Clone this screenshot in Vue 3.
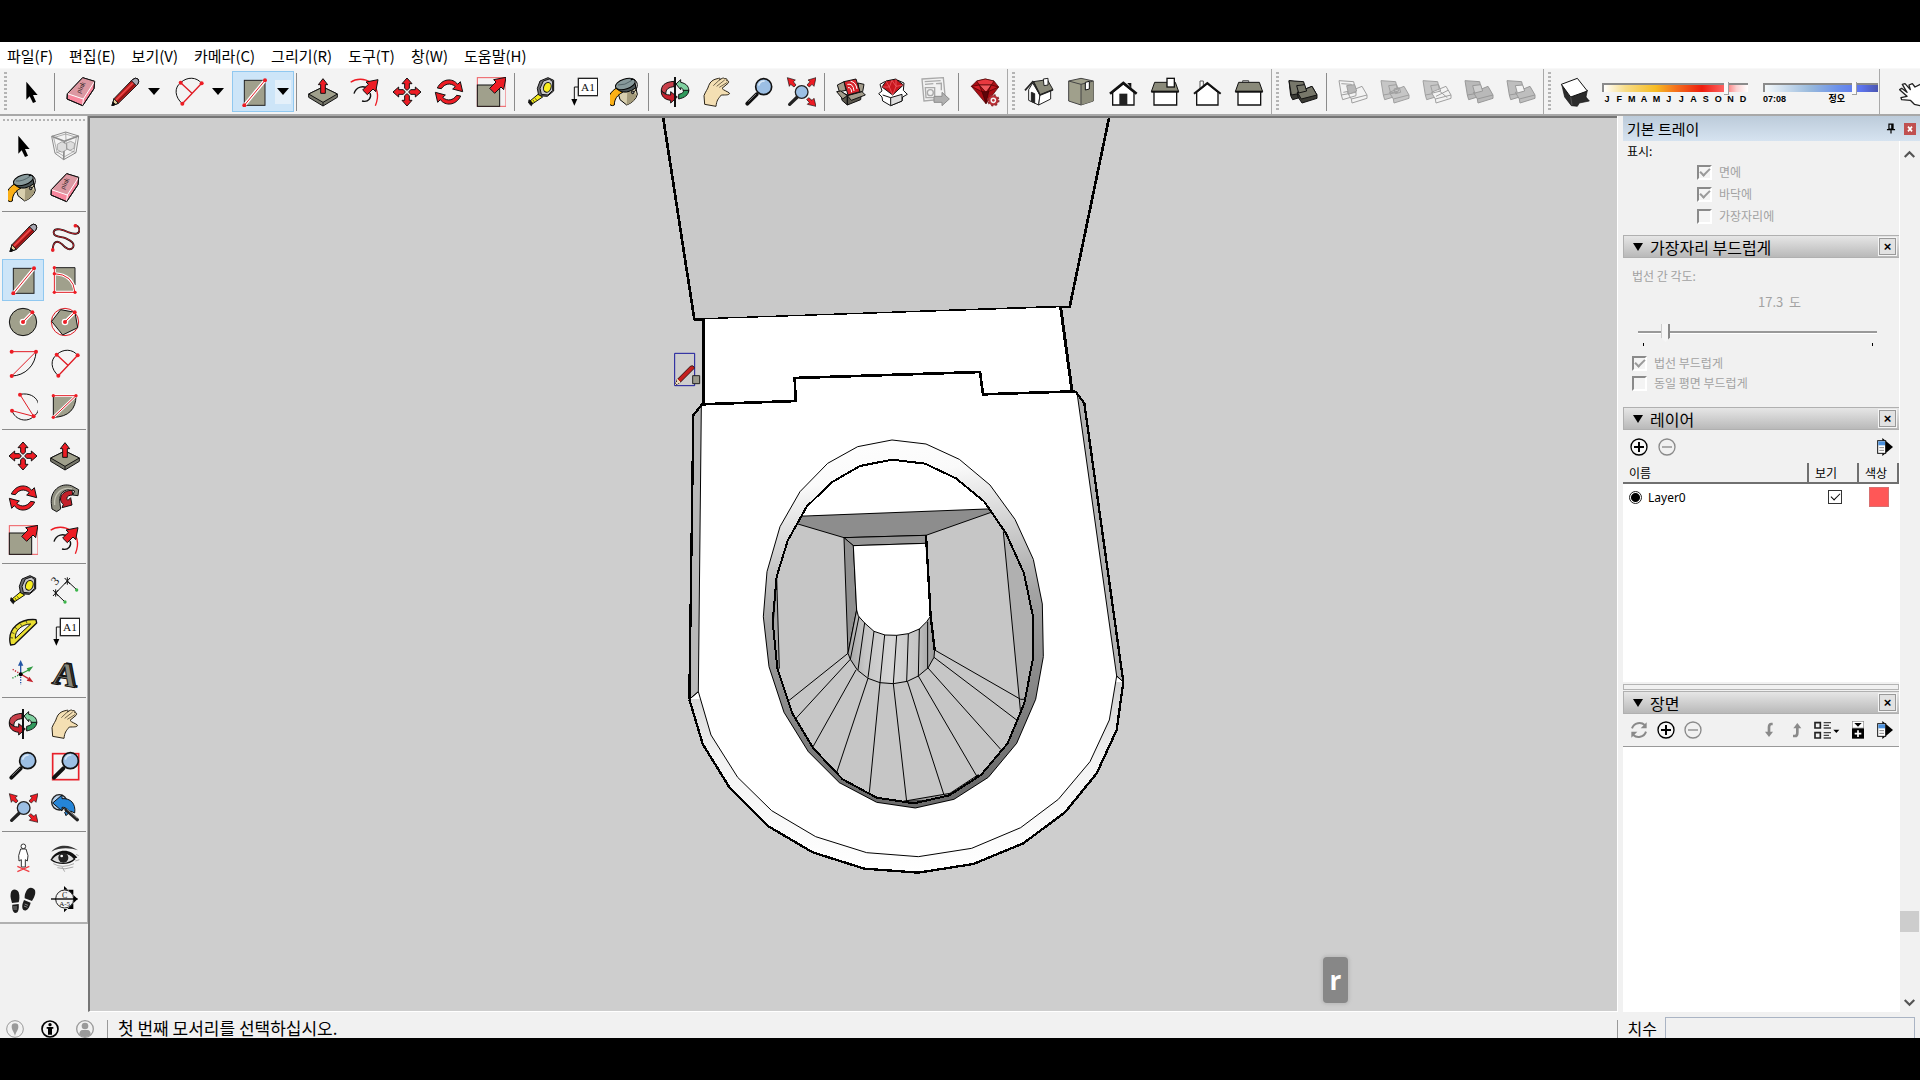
<template>
    <div class="screen">
        <svg class="sprite" aria-hidden="true">
            <defs>
                <symbol id="i-select" viewBox="0 0 90 90">
                    <path d="M31 14V68L41 58L51 78L60 74L51 54H65Z" fill="#000" />
                </symbol>
                <symbol id="i-component" viewBox="0 0 90 90">
                    <g fill="none" stroke="#8c8c8c" stroke-width="3" stroke-linejoin="round">
                        <path d="M5 16L47 3L86 15L78 65L41 86L15 67Z" />
                        <path d="M11 20L47 9L79 19L72 61L44 77L21 63Z" stroke-width="2" />
                        <path d="M5 16L43 31L86 15M43 31L41 86" stroke-width="5" />
                        <path d="M15 67L49 54L78 65M49 54L47 3" stroke-width="2" />
                        <path d="M22 40l14-8 14 8v16l-14 8-14-8zM50 36l12-5 12 6-2 15-12 6-10-6z" fill="#ddd" stroke-width="2" />
                    </g>
                </symbol>
                <symbol id="i-paint" viewBox="0 0 90 90">
                    <g stroke="#000" stroke-width="3" stroke-linejoin="round">
                        <path d="M18 26L74 18L82 52Q76 74 50 84L30 68Z" fill="#d8cfae" />
                        <path d="M52 42L80 52Q76 74 50 84Z" fill="#a49b7b" stroke="none" />
                        <path d="M22 40Q50 54 78 32L74 16Q48 34 20 32Z" fill="#4b5557" />
                        <ellipse cx="46" cy="21" rx="31" ry="15" transform="rotate(-18 46 21)" fill="#87999b" />
                        <path d="M24 24Q44 26 66 10" fill="none" stroke="#55666a" />
                        <path d="M62 8C84 2 90 34 68 48" fill="none" />
                        <circle cx="68" cy="46" r="4" fill="#888" />
                        <path d="M18 34C2 44 -7 60 -5 76Q2 90 13 84C13 66 22 54 38 46Q28 42 18 34Z" fill="#fbb016" />
                    </g>
                </symbol>
                <symbol id="i-eraser" viewBox="0 0 90 90">
                    <g stroke="#111" stroke-width="3" stroke-linejoin="round">
                        <path d="M50 2L86 13L84 35L50 86L3 66L4 50Z" fill="#f7879d" />
                        <path d="M50 2L86 13L52 66L4 50Z" fill="#dc98a2" stroke="none" />
                        <path d="M4 50L52 66L86 13M52 66L50 86" fill="none" stroke="#fff" stroke-width="3" />
                        <path d="M50 2L86 13L84 35L50 86L3 66L4 50Z" fill="none" />
                    </g>
                    <text x="0" y="0" transform="translate(42 50) rotate(-62)" class="tiny-serif" font-size="20">pink</text>
                </symbol>
                <symbol id="i-pencil" viewBox="0 0 90 90">
                    <g stroke="#111" stroke-width="3" stroke-linejoin="round">
                        <path d="M6 86L12 65L67 8Q76 0 84 6Q89 14 82 23L25 79Z" fill="#bb1d1d" />
                        <path d="M6 86L12 65L25 79Z" fill="#e6cf9c" />
                        <path d="M6 86L9 76L16 82Z" fill="#000" />
                        <path d="M18 69L72 15" stroke="#ef4b4b" stroke-width="4" />
                        <path d="M22 75L77 20" stroke="#6d0c0c" stroke-width="3" />
                        <path d="M64 11L79 26L83 22Q89 14 84 6Q76 0 68 8Z" fill="#a9a9b4" />
                    </g>
                </symbol>
                <symbol id="i-freehand" viewBox="-4 0 98 90">
                    <g fill="none" stroke-linecap="round">
                        <path d="M5 86C5 54 20 52 35 65C48 80 62 88 71 76C78 64 66 54 48 46C30 40 6 42 8 25C12 8 42 20 58 27C78 34 92 32 92 19C92 8 86 5 79 3" stroke="#111" stroke-width="6" />
                        <path d="M5 86C5 54 20 52 35 65C48 80 62 88 71 76C78 64 66 54 48 46C30 40 6 42 8 25C12 8 42 20 58 27C78 34 92 32 92 19C92 8 86 5 79 3" stroke="#d2252f" stroke-width="3" />
                    </g>
                    <circle cx="5" cy="84" r="6" fill="#ed1c24" /><circle cx="79" cy="5" r="6" fill="#ed1c24" />
                </symbol>
                <symbol id="i-rect" viewBox="0 0 90 90">
                    <rect x="16" y="10" width="62" height="75" fill="#a0a08c" stroke="#222" stroke-width="3" />
                    <path d="M16 85L78 10" stroke="#fff" stroke-width="10" />
                    <path d="M16 85L78 10" stroke="#e01b24" stroke-width="3" />
                    <circle cx="16" cy="85" r="6" fill="#ed1c24" /><circle cx="78" cy="10" r="6" fill="#ed1c24" />
                </symbol>
                <symbol id="i-rotrect" viewBox="0 0 90 90">
                    <path d="M13 8H75V82H13Z" fill="#a0a08c" />
                    <path d="M13 8H75V60" fill="none" stroke="#222" stroke-width="3" />
                    <path d="M13 26Q70 28 75 82H13V8" fill="none" stroke="#fff" stroke-width="9" />
                    <path d="M13 26Q70 28 75 82H13V8" fill="none" stroke="#e01b24" stroke-width="3" />
                    <g fill="#ed1c24"><circle cx="13" cy="8" r="5" /><circle cx="13" cy="26" r="5" /><circle cx="13" cy="82" r="5" /><circle cx="75" cy="82" r="5" /></g>
                </symbol>
                <symbol id="i-circle" viewBox="0 0 90 90">
                    <circle cx="45" cy="45" r="41" fill="#a0a08c" stroke="#111" stroke-width="3" />
                    <path d="M45 45L73 16" stroke="#fff" stroke-width="10" /><circle cx="45" cy="45" r="10" fill="#fff" />
                    <path d="M45 45L73 16" stroke="#e01b24" stroke-width="3" />
                    <circle cx="45" cy="45" r="6" fill="#ed1c24" /><circle cx="73" cy="16" r="6" fill="#ed1c24" />
                </symbol>
                <symbol id="i-polygon" viewBox="0 0 90 90">
                    <circle cx="45" cy="45" r="41" fill="none" stroke="#e01b24" stroke-width="3" />
                    <path d="M32 8L75 16L83 62L38 84L5 43Z" fill="#a0a08c" stroke="#111" stroke-width="3" />
                    <path d="M45 45L74 16" stroke="#fff" stroke-width="10" /><circle cx="45" cy="45" r="10" fill="#fff" />
                    <path d="M45 45L74 16" stroke="#e01b24" stroke-width="3" />
                    <circle cx="45" cy="45" r="6" fill="#ed1c24" /><circle cx="74" cy="16" r="6" fill="#ed1c24" />
                </symbol>
                <symbol id="i-arc" viewBox="0 0 90 90">
                    <path d="M84 8A74 74 0 0 1 11 81" fill="none" stroke="#111" stroke-width="3" />
                    <path d="M11 8H84L11 81" fill="none" stroke="#e01b24" stroke-width="3" />
                    <g fill="#ed1c24"><circle cx="11" cy="8" r="6" /><circle cx="84" cy="8" r="6" /><circle cx="11" cy="81" r="6" /></g>
                </symbol>
                <symbol id="i-arc2" viewBox="0 0 90 90">
                    <path d="M25 80C2 60 0 32 20 17C40 -2 68 0 83 19" fill="none" stroke="#111" stroke-width="3" />
                    <path d="M25 80L83 19M20 17L54 49" fill="none" stroke="#e01b24" stroke-width="4" />
                    <g fill="#ed1c24"><circle cx="20" cy="17" r="6" /><circle cx="83" cy="19" r="6" /><circle cx="25" cy="80" r="6" /></g>
                </symbol>
                <symbol id="i-arc3" viewBox="0 0 90 90">
                    <path d="M36 10C92 0 108 56 77 76C58 96 22 88 12 59" fill="none" stroke="#111" stroke-width="3" />
                    <path d="M36 11L77 76L12 59" fill="none" stroke="#e01b24" stroke-width="3" />
                    <g fill="#ed1c24"><circle cx="36" cy="11" r="6" /><circle cx="77" cy="76" r="6" /><circle cx="12" cy="59" r="6" /></g>
                </symbol>
                <symbol id="i-pie" viewBox="0 0 90 90">
                    <path d="M10 14H78C78 54 56 78 10 79Z" fill="#a0a08c" />
                    <path d="M78 14C78 54 56 78 10 79V14" fill="none" stroke="#111" stroke-width="3" />
                    <path d="M10 14H78L10 79" fill="none" stroke="#fff" stroke-width="8" />
                    <path d="M10 14H78L10 79" fill="none" stroke="#e01b24" stroke-width="3" />
                    <g fill="#ed1c24"><circle cx="10" cy="14" r="5" /><circle cx="78" cy="14" r="5" /><circle cx="10" cy="79" r="5" /></g>
                </symbol>
                <symbol id="i-move" viewBox="0 0 90 90">
                    <g fill="#ed1c24" stroke="#111" stroke-width="3" stroke-linejoin="round">
                        <path id="mv" d="M45 3L60 20H52V34L45 40L38 34V20H30Z" />
                        <use href="#mv" transform="rotate(90 45 45)" /><use href="#mv" transform="rotate(180 45 45)" /><use href="#mv" transform="rotate(270 45 45)" />
                    </g>
                </symbol>
                <symbol id="i-pushpull" viewBox="0 0 90 90">
                    <g stroke="#111" stroke-width="3" stroke-linejoin="round">
                        <path d="M2 51L45 30L88 51V61L45 87L2 61Z" fill="#77776a" />
                        <path d="M2 51L45 30L88 51L45 76Z" fill="#a0a08c" />
                        <path d="M45 76V87" />
                        <path d="M45 5L59 23H52V49H38V23H31Z" fill="#ed1c24" />
                    </g>
                </symbol>
                <symbol id="i-rotate" viewBox="0 0 90 90">
                    <g fill="#ed1c24" stroke="#111" stroke-width="3" stroke-linejoin="round">
                        <path id="ro" d="M10 33C24 4 56 2 71 22L79 14L86 44L56 36L64 29C50 16 32 20 22 35Z" />
                        <use href="#ro" transform="rotate(180 45 45)" />
                    </g>
                </symbol>
                <symbol id="i-follow" viewBox="0 0 90 90">
                    <g stroke="#111" stroke-width="3" stroke-linejoin="round">
                        <path d="M4 62C0 24 30 -2 64 8L86 20L84 38L68 36L74 24C44 12 24 32 30 62L32 78L20 86L6 78Z" fill="#8e8e80" />
                        <path d="M14 66C10 34 34 10 66 18" fill="none" stroke="#c3c3b4" stroke-width="4" />
                        <path d="M66 22C34 22 22 50 40 64L36 74L66 66L62 44L54 52C46 46 52 36 68 36Z" fill="#c3202a" />
                    </g>
                </symbol>
                <symbol id="i-scale" viewBox="0 0 90 90">
                    <rect x="4" y="2" width="86" height="86" fill="none" stroke="#ef5b60" stroke-width="3" />
                    <rect x="4" y="24" width="67" height="64" fill="#a0a08c" stroke="#111" stroke-width="3" />
                    <path d="M90 1L83 38L75 30L56 49L41 34L60 15L53 8Z" fill="#ed1c24" stroke="#111" stroke-width="3" />
                </symbol>
                <symbol id="i-offset" viewBox="0 0 90 90">
                    <path d="M2 16C36 -10 104 20 76 86" fill="none" stroke="#ed1c24" stroke-width="4" />
                    <path d="M12 50C18 28 42 24 54 36M36 72C56 78 66 60 60 48" fill="none" stroke="#111" stroke-width="4" />
                    <path d="M84 8L77 44L69 36L52 53L38 39L55 22L48 15Z" fill="#ed1c24" stroke="#111" stroke-width="3" />
                </symbol>
                <symbol id="i-tape" viewBox="0 0 90 90">
                    <g stroke="#111" stroke-width="3" stroke-linejoin="round">
                        <path d="M42 12L66 2L83 10V42L64 58L38 56L34 34Z" fill="#6d6d70" />
                        <path d="M52 12L70 6L80 14V40L66 54L46 52L42 34Z" fill="#c7c7c9" />
                        <ellipse cx="64" cy="31" rx="11" ry="15" fill="#f8ee20" transform="rotate(20 64 31)" />
                        <path d="M36 52L50 60L20 80L12 72Z" fill="#f6ee1c" />
                        <path d="M9 68L20 78L16 86L8 78Z" fill="#111" />
                        <path d="M28 64L32 70M21 69L25 75" stroke-width="2" />
                    </g>
                </symbol>
                <symbol id="i-dimension" viewBox="0 0 90 90">
                    <path d="M52 18L17 54M52 18L80 44M17 54L44 80" stroke="#111" stroke-width="3" />
                    <path d="M44 9L60 27M60 9L44 27M52 7V29M9 45L25 63M25 45L9 63M17 43V65" stroke="#111" stroke-width="3" />
                    <circle cx="80" cy="45" r="5" fill="#3bb54a" /><circle cx="45" cy="81" r="5" fill="#3bb54a" />
                    <text transform="translate(18 32) rotate(-48)" class="tiny-serif" font-size="36">3</text>
                </symbol>
                <symbol id="i-protractor" viewBox="0 0 90 90">
                    <path d="M6 76C0 34 36 4 84 8L86 18L20 82L8 84Z" fill="#eadf32" stroke="#111" stroke-width="4" stroke-linejoin="round" />
                    <path d="M22 64C20 38 44 22 68 21Z" fill="#f3f3f3" stroke="#111" stroke-width="3" />
                    <path d="M7 62l8 1M11 46l8 4M21 31l7 6M36 19l5 7M54 11l3 8" stroke="#111" stroke-width="2" />
                </symbol>
                <symbol id="i-text" viewBox="0 0 90 90">
                    <path d="M31 30H19V70" fill="none" stroke="#111" stroke-width="3" />
                    <path d="M10 66H28L19 86Z" fill="#000" />
                    <rect x="31" y="4" width="58" height="52" fill="#fff" stroke="#222" stroke-width="4" />
                    <text x="60" y="41" text-anchor="middle" class="tiny-serif" font-size="34">A1</text>
                </symbol>
                <symbol id="i-axes" viewBox="0 0 90 90">
                    <g fill="none" stroke-width="4">
                        <path d="M38 45V18" stroke="#2456a6" /><path d="M38 45V78" stroke="#2456a6" stroke-dasharray="4 4" />
                        <path d="M38 45L62 33" stroke="#2e9a41" /><path d="M38 45L12 58" stroke="#2e9a41" stroke-dasharray="4 4" />
                        <path d="M38 45L60 58" stroke="#c3202a" /><path d="M38 45L14 31" stroke="#c3202a" stroke-dasharray="4 4" />
                    </g>
                    <path d="M38 3L46 20H30Z" fill="#2456a6" /><path d="M76 22L63 39L56 28Z" fill="#2e9a41" /><path d="M76 70L56 65L64 53Z" fill="#c3202a" />
                    <circle cx="38" cy="46" r="6" fill="#000" />
                </symbol>
                <symbol id="i-text3d" viewBox="0 0 90 90">
                    <g class="solid-a" font-size="100" transform="rotate(10 45 45)">
                        <text x="15" y="78" fill="#3c3c34" stroke="#111" stroke-width="4">A</text>
                        <text x="9" y="80" fill="#86867a" stroke="#111" stroke-width="3">A</text>
                    </g>
                </symbol>
                <symbol id="i-orbit" viewBox="0 0 90 90">
                    <g stroke="#111" stroke-width="3" stroke-linejoin="round">
                        <path d="M42 13C14 15 2 26 5 44L18 50C16 38 26 30 42 29Z" fill="#c8404a" />
                        <path d="M48 21L62 8V16C82 20 88 32 86 44L70 42C70 36 66 33 62 32V38Z" fill="#7fd0a0" />
                        <path d="M86 40C86 54 74 62 56 66V52C66 50 72 46 70 40Z" fill="#2f9a5c" />
                        <path d="M4 38C6 50 20 54 32 54V44L52 60L32 78V70C14 68 2 58 4 38Z" fill="#c8202c" />
                    </g>
                    <path d="M45 0V90" stroke="#111" stroke-width="6" />
                </symbol>
                <symbol id="i-pan" viewBox="0 0 90 90">
                    <path d="M6 56C10 44 18 36 20 26C24 14 34 8 42 6L50 4C54 2 56 6 52 9C60 4 64 1 68 5C76 4 76 8 74 11C80 10 82 15 78 19L60 34C64 40 78 44 82 48C84 54 74 54 58 54C48 66 44 70 42 88L8 82Z" fill="#f4dfb3" stroke="#2b2418" stroke-width="3" stroke-linejoin="round" />
                    <path d="M34 26L52 9M44 28L68 9M52 31L76 16" fill="none" stroke="#2b2418" stroke-width="2" />
                </symbol>
                <symbol id="i-zoom" viewBox="0 0 90 90">
                    <path d="M10 80L38 52" stroke="#111" stroke-width="12" stroke-linecap="round" />
                    <path d="M13 74L36 51" stroke="#777" stroke-width="3" />
                    <circle cx="59" cy="29" r="24" fill="#9cbfe4" stroke="#111" stroke-width="5" />
                    <path d="M44 26C46 16 54 12 62 12" fill="none" stroke="#d7e7f6" stroke-width="5" />
                </symbol>
                <symbol id="i-zoomwin" viewBox="0 0 90 90">
                    <rect x="8" y="8" width="78" height="78" fill="none" stroke="#e8202a" stroke-width="5" />
                    <path d="M12 80L40 52" stroke="#111" stroke-width="12" stroke-linecap="round" />
                    <circle cx="61" cy="29" r="24" fill="#9cbfe4" stroke="#111" stroke-width="5" />
                    <path d="M46 26C48 16 56 12 64 12" fill="none" stroke="#d7e7f6" stroke-width="5" />
                </symbol>
                <symbol id="i-zoomext" viewBox="0 0 90 90">
                    <path d="M11 82L34 60" stroke="#222" stroke-width="10" stroke-linecap="round" />
                    <circle cx="47" cy="45" r="19" fill="#9cbfe4" stroke="#222" stroke-width="4" />
                    <g fill="#ed1c24" stroke="#111" stroke-width="2" stroke-linejoin="round">
                        <path d="M4 2L28 9L22 14L30 24L24 30L14 22L10 28Z" />
                        <path d="M90 2L84 28L78 22L70 30L63 24L72 14L66 9Z" />
                        <path d="M90 88L64 82L70 76L62 68L68 62L78 70L84 64Z" />
                    </g>
                </symbol>
                <symbol id="i-previous" viewBox="0 0 90 90">
                    <circle cx="28" cy="28" r="23" fill="#bdd3ea" stroke="#222" stroke-width="4" />
                    <path d="M8 30L36 6V17C62 15 78 32 74 60L62 54L48 68L44 58C54 50 50 42 36 43V54Z" fill="#2585d8" stroke="#111" stroke-width="3" />
                    <path d="M48 50L82 80" stroke="#222" stroke-width="10" stroke-linecap="round" />
                    <path d="M50 48L82 76" stroke="#888" stroke-width="3" />
                </symbol>
                <symbol id="i-position" viewBox="0 0 90 90">
                    <circle cx="46" cy="10" r="7" fill="#fff" stroke="#333" stroke-width="3" />
                    <path d="M38 18H54L60 38L58 54L52 50V72H40V50L33 54L32 38Z" fill="#fff" stroke="#333" stroke-width="3" />
                    <path d="M28 70L64 86M64 70L28 86" stroke="#ef4046" stroke-width="4" />
                </symbol>
                <symbol id="i-look" viewBox="0 0 90 90">
                    <path d="M4 26C24 2 60 4 84 22C62 14 30 12 4 26Z" fill="#333" />
                    <path d="M4 50C20 26 56 22 74 48C56 66 22 64 4 50Z" fill="#ddd" stroke="#111" stroke-width="4" />
                    <path d="M4 46C22 16 62 16 82 44L74 46C54 26 28 28 4 46Z" fill="#111" />
                    <circle cx="40" cy="44" r="15" fill="#222" /><circle cx="35" cy="39" r="4" fill="#fff" />
                    <path d="M10 62Q36 78 72 62M22 74Q44 82 70 72M78 34L86 38M76 54L88 50M36 72L44 86" fill="none" stroke="#aaa" stroke-width="3" />
                </symbol>
                <symbol id="i-walk" viewBox="0 0 90 90">
                    <g fill="#1c1c1c">
                        <path d="M8 26C10 10 26 10 32 22C36 34 34 46 32 52L12 54C10 44 6 36 8 26Z" /><path d="M13 59L32 57C34 74 30 84 22 84C14 82 12 72 13 59Z" />
                        <path d="M54 20C60 4 76 6 81 16C84 28 78 38 72 48L50 40C50 32 50 28 54 20Z" /><path d="M48 45L68 53C64 70 56 78 48 76C40 72 42 58 48 45Z" />
                    </g>
                    <path d="M15 66h12M16 72h11M50 57l10 4M48 63l10 4" stroke="#bbb" stroke-width="2" />
                </symbol>
                <symbol id="i-section" viewBox="0 0 90 90">
                    <path d="M42 3L83 42L42 82V72H70V14H42Z" fill="#000" />
                    <circle cx="44" cy="42" r="27" fill="#f3f3f3" stroke="#222" stroke-width="3" />
                    <path d="M3 42H83" stroke="#000" stroke-width="4" />
                    <text x="44" y="38" text-anchor="middle" class="tiny-serif" font-size="24">C</text>
                    <text x="44" y="62" text-anchor="middle" class="tiny-serif" font-size="21">A-5</text>
                </symbol>
                <symbol id="i-warehouse" viewBox="0 0 90 90">
                    <g stroke="#111" stroke-width="3" stroke-linejoin="round">
                        <path d="M4 24L24 14L30 40L10 44ZM66 18L84 22L80 44L70 46Z" fill="#a39c8b" />
                        <path d="M14 44L34 54V84L18 70ZM34 54L76 46L74 68L34 84Z" fill="#5a564c" />
                        <path d="M2 44L14 42L34 56L20 66ZM34 56L78 44L88 54L46 70Z" fill="#a39c8b" />
                        <path d="M24 14L60 6L72 44L36 54Z" fill="#d8232b" />
                    </g>
                    <path d="M34 22Q52 18 54 42M36 32Q46 30 47 46M44 13Q60 16 63 36" fill="none" stroke="#fff" stroke-width="3" />
                </symbol>
                <symbol id="i-extwarehouse" viewBox="0 0 90 90">
                    <g stroke="#111" stroke-width="3" stroke-linejoin="round">
                        <path d="M6 22L20 14L32 18L60 10L78 18L76 40L88 52L74 60L72 72L38 86L14 72L12 60L2 50L12 42Z" fill="#fff" />
                        <path d="M38 62V86L72 72V52ZM14 54L38 62" fill="#ddd" />
                        <path d="M12 30L24 12L54 6L76 24L44 54Z" fill="#c8161e" />
                        <path d="M12 30L34 30L44 54L54 28L76 24M24 12L34 30L42 10L54 28L54 6" fill="none" stroke="#f46a70" stroke-width="2" />
                    </g>
                </symbol>
                <symbol id="i-layout" viewBox="0 0 90 90">
                    <g fill="none" stroke="#a9a9a9" stroke-width="4">
                        <path d="M6 6L70 2L76 66L12 72Z" fill="#f1f1f1" /><path d="M14 14L62 11M15 22L40 20M48 20L64 19V40M16 32H44V62H18Z" />
                        <circle cx="31" cy="47" r="9" />
                    </g>
                    <path d="M42 58H66V46L88 66L66 86V76H42Z" fill="#b0b0b0" stroke="#8d8d8d" stroke-width="3" />
                </symbol>
                <symbol id="i-ruby" viewBox="0 0 90 90">
                    <g stroke="#400" stroke-width="2" stroke-linejoin="round">
                        <path d="M4 28L20 12L46 6L72 12L86 30L48 80Z" fill="#a80d14" />
                        <path d="M20 12L46 6L72 12L64 24L28 24Z" fill="#e8393f" /><path d="M4 28L28 24L36 44Z" fill="#d31f27" /><path d="M28 24H64L48 46Z" fill="#f05a5e" />
                        <path d="M86 30L64 24L54 44Z" fill="#c2151d" /><path d="M36 44L48 80L56 44Z" fill="#5e0509" />
                    </g>
                    <circle cx="70" cy="70" r="12" fill="#f3f3f3" stroke="#b93036" stroke-width="7" />
                    <circle cx="70" cy="70" r="16" fill="none" stroke="#8e2b2f" stroke-width="5" stroke-dasharray="6 6.5" />
                    <circle cx="70" cy="70" r="4" fill="#b93036" />
                </symbol>
                <symbol id="i-iso" viewBox="0 0 90 90">
                    <g stroke="#222" stroke-width="3" stroke-linejoin="round">
                        <path d="M14 38L26 18L48 54L44 84L14 70Z" fill="#fff" /><path d="M44 84L48 52L80 38V66Z" fill="#fff" />
                        <path d="M28 14L70 8L87 38L48 54Z" fill="#8a8a7a" />
                        <path d="M28 12L3 40M28 14L48 54L87 38" fill="none" stroke-width="5" />
                        <path d="M22 46L32 50V78L22 73Z" fill="#222" /><path d="M58 6L72 4V24L60 26Z" fill="#fff" />
                    </g>
                </symbol>
                <symbol id="i-top" viewBox="0 0 90 90">
                    <path d="M8 12L45 4L82 12V72L45 84L8 72Z" fill="#a0a08c" stroke="#444" stroke-width="3" />
                    <path d="M45 22V84L82 72V12Z" fill="#8f8f7d" /><path d="M8 12L45 22L82 12M45 22V84" fill="none" stroke="#444" stroke-width="3" />
                    <path d="M58 16L70 13V36L58 39Z" fill="#fff" stroke="#111" stroke-width="3" />
                </symbol>
                <symbol id="i-front" viewBox="0 0 90 90">
                    <path d="M14 46L46 20L78 46V84H14Z" fill="#fff" stroke="#111" stroke-width="4" />
                    <path d="M6 50L46 18L86 50" fill="none" stroke="#111" stroke-width="8" /><rect x="34" y="50" width="24" height="34" fill="#222" /><path d="M58 18h12v16z" fill="#111" />
                </symbol>
                <symbol id="i-right" viewBox="0 0 90 90">
                    <path d="M12 40H80V84H12Z" fill="#fff" stroke="#111" stroke-width="4" />
                    <path d="M14 16H76L86 44H4Z" fill="#8a8a7a" stroke="#111" stroke-width="3" /><path d="M4 44H86" stroke="#111" stroke-width="6" />
                    <rect x="51" y="4" width="22" height="26" fill="#fff" stroke="#111" stroke-width="4" />
                </symbol>
                <symbol id="i-back" viewBox="0 0 90 90">
                    <path d="M24 34V12H34V28" fill="#fff" stroke="#555" stroke-width="3" />
                    <path d="M14 46L46 20L78 46V84H14Z" fill="#fff" stroke="#111" stroke-width="4" /><path d="M6 50L46 18L86 50" fill="none" stroke="#111" stroke-width="6" />
                </symbol>
                <symbol id="i-left" viewBox="0 0 90 90">
                    <path d="M26 16V11H44V16" fill="#ccc" stroke="#555" stroke-width="3" />
                    <path d="M12 40H80V84H12Z" fill="#fff" stroke="#111" stroke-width="4" />
                    <path d="M14 16H76L86 44H4Z" fill="#8a8a7a" stroke="#111" stroke-width="3" /><path d="M4 44H86" stroke="#111" stroke-width="6" />
                </symbol>
                <symbol id="i-shell" viewBox="0 0 90 90">
                    <g stroke="#111" stroke-width="3" stroke-linejoin="round">
                        <path d="M3 11L47 18L54 48V56L14 68L8 56Z" fill="#3b3b35" />
                        <path d="M3 11L47 14L54 46L10 54Z" fill="#77776a" />
                        <path d="M28 46L72 28L87 54V64L42 78L30 60Z" fill="#3b3b35" />
                        <path d="M28 46L72 28L87 54L40 66Z" fill="#77776a" />
                        <path d="M26 26L50 23L56 42L32 48Z" fill="#77776a" />
                    </g>
                </symbol>
                <symbol id="i-solid1" viewBox="0 0 90 90">
                    <g stroke="#a0a0a0" stroke-width="3" stroke-linejoin="round" fill="none">
                        <path d="M3 11L47 14L54 46L10 54ZM10 54L14 68L54 56V46M28 46L72 28L87 54L40 66ZM40 66L42 78L87 64V54M10 20L40 22L46 40L16 46" />
                        <path d="M26 26L50 23L56 42L32 52Z" fill="#b8b8b8" />
                    </g>
                </symbol>
                <symbol id="i-solid2" viewBox="0 0 90 90">
                    <g stroke="#a0a0a0" stroke-width="3" stroke-linejoin="round">
                        <path d="M3 11L47 14L54 46V56L14 68L10 54Z" fill="#c6c6c6" />
                        <path d="M28 46L72 28L87 54V64L42 78L40 66Z" fill="#c6c6c6" />
                        <path d="M10 54L54 46M40 66L87 54M26 26L50 23L56 42L32 48ZM42 36L58 32L62 46L46 50Z" fill="none" />
                    </g>
                </symbol>
                <symbol id="i-solid3" viewBox="0 0 90 90">
                    <g stroke="#a0a0a0" stroke-width="3" stroke-linejoin="round">
                        <path d="M3 11L47 14L54 46V56L14 68L10 54Z" fill="#c6c6c6" />
                        <path d="M28 46L72 28L87 54V64L42 78L40 66Z" fill="#f3f3f3" />
                        <path d="M40 66L87 54M50 40L76 62M42 58L78 40M10 54L32 50M26 26L50 23L56 42L32 48Z" fill="none" />
                    </g>
                </symbol>
                <symbol id="i-solid4" viewBox="0 0 90 90">
                    <g stroke="#999" stroke-width="3" stroke-linejoin="round">
                        <path d="M3 11L47 14L54 46V56L14 68L10 54Z" fill="#b9b9b9" />
                        <path d="M28 46L72 28L87 54V64L42 78L40 66Z" fill="#b9b9b9" />
                        <path d="M10 54L34 50M40 66L87 54" fill="none" />
                        <path d="M26 26L50 23L56 42L32 48Z" fill="#cecece" />
                    </g>
                </symbol>
                <symbol id="i-solid5" viewBox="0 0 90 90">
                    <g stroke="#999" stroke-width="3" stroke-linejoin="round">
                        <path d="M3 11L47 14L54 46V56L14 68L10 54Z" fill="#bebebe" />
                        <path d="M28 46L72 28L87 54V64L42 78L40 66Z" fill="#bebebe" />
                        <path d="M10 54L34 50M40 66L87 54" fill="none" />
                        <path d="M28 26L50 24L56 42L34 48Z" fill="#f3f3f3" />
                    </g>
                </symbol>
                <symbol id="i-shadow" viewBox="0 0 90 90">
                    <path d="M5 22L14 60L34 86L52 88L58 78L88 72L78 60L82 40L30 60Z" fill="#2c2c2c" stroke="#111" stroke-width="2" />
                    <path d="M4 22L52 4L82 42L32 60Z" fill="#fff" stroke="#111" stroke-width="3" /><path d="M32 60L36 84" stroke="#666" stroke-width="2" />
                </symbol>
                <symbol id="i-grab" viewBox="0 0 90 90">
                    <path d="M90 18L66 30L58 20L48 24L52 38L36 20L28 22L42 46L26 34L20 38L42 58L24 62L26 68L52 70L64 82L90 88" fill="#fff" stroke="#222" stroke-width="4" stroke-linejoin="round" />
                </symbol>
                <symbol id="i-details" viewBox="0 0 48 54">
                    <path d="M16 0L48 27L16 54Z" fill="#000" /><rect x="2" y="8" width="24" height="38" fill="#fff" stroke="#111" stroke-width="3" />
                    <rect x="4" y="10" width="20" height="12" fill="#4a90dc" /><path d="M7 29H21M7 37H21" stroke="#888" stroke-width="3" />
                </symbol>
                <symbol id="i-add" viewBox="0 0 54 54">
                    <circle cx="27" cy="27" r="24" fill="#f7f7f7" stroke="#000" stroke-width="4" /><path d="M27 12V42M12 27H42" stroke="#000" stroke-width="6" />
                </symbol>
                <symbol id="i-remove" viewBox="0 0 54 54">
                    <circle cx="27" cy="27" r="24" fill="none" stroke="#8a8a8a" stroke-width="4" /><path d="M12 27H42" stroke="#8a8a8a" stroke-width="4" />
                </symbol>
                <symbol id="i-refresh" viewBox="0 0 54 54">
                    <path d="M6 22C12 4 34 2 44 12M48 32C42 50 20 52 10 42" fill="none" stroke="#8a8a8a" stroke-width="6" /><path d="M50 4V22H32ZM4 50V32H22Z" fill="#8a8a8a" />
                </symbol>
                <symbol id="i-down" viewBox="0 0 54 54">
                    <path d="M38 9H34Q27 9 27 19V36" fill="none" stroke="#8a8a8a" stroke-width="8" /><path d="M15 32H39L27 48Z" fill="#8a8a8a" />
                </symbol>
                <symbol id="i-up" viewBox="0 0 54 54">
                    <path d="M18 45H24Q31 45 31 35V18" fill="none" stroke="#8a8a8a" stroke-width="8" /><path d="M19 22H43L31 6Z" fill="#8a8a8a" />
                </symbol>
                <symbol id="i-list" viewBox="0 0 78 54">
                    <path d="M3 5H19V21H3ZM3 35H19V51H3Z" fill="none" stroke="#222" stroke-width="5" /><path d="M29 5H51M29 13H45M29 21H51M29 35H51M29 43H45M29 51H51" stroke="#444" stroke-width="4" /><path d="M58 26H76L67 36Z" fill="#000" />
                </symbol>
                <symbol id="i-export" viewBox="0 0 54 54">
                    <rect x="10" y="1" width="34" height="20" fill="#fff" stroke="#888" stroke-width="2" /><path d="M16 6H38L27 17Z" fill="#000" /><rect x="9" y="22" width="36" height="31" fill="#000" /><path d="M27 28V48M17 38H37" stroke="#fff" stroke-width="5" />
                </symbol>
                <symbol id="i-geo" viewBox="0 0 54 54">
                    <circle cx="27" cy="27" r="25" fill="none" stroke="#9a9a9a" stroke-width="3" /><path d="M27 48C24 34 17 30 17 20A10 10 0 0 1 37 20C37 30 30 34 27 48Z" fill="#9a9a9a" />
                </symbol>
                <symbol id="i-info" viewBox="0 0 54 54">
                    <circle cx="27" cy="27" r="24" fill="none" stroke="#000" stroke-width="5" /><circle cx="27" cy="14" r="5" /><path d="M17 21H37V26H33V44H21V26H17Z" />
                </symbol>
                <symbol id="i-user" viewBox="0 0 54 54">
                    <circle cx="27" cy="27" r="25" fill="none" stroke="#9a9a9a" stroke-width="4" /><circle cx="27" cy="18" r="10" fill="#9a9a9a" /><path d="M10 44Q10 30 20 30H34Q44 30 44 44Q27 58 10 44Z" fill="#9a9a9a" />
                </symbol>
            </defs>
        </svg>

        <nav class="menu">
            <button v-for="name in menus" :key="name" type="button">{{ name }}</button>
        </nav>

        <div class="bars">
            <div v-for="bar in toolbars" :key="bar.id" class="bar" role="toolbar">
                <span class="grip"></span>
                <template v-for="(group, g) in bar.groups" :key="g">
                    <span v-if="g" class="vsep"></span>
                    <template v-for="item in group" :key="item.icon">
                        <div v-if="item.split" class="split" :class="{ active: item.active }">
                            <button type="button" class="tool" :aria-label="item.label"><svg><use :href="'#i-' + item.icon" /></svg></button>
                            <button type="button" class="more" :aria-label="item.label + ' 메뉴'"></button>
                        </div>
                        <button v-else type="button" class="tool" :aria-label="item.label"><svg><use :href="'#i-' + item.icon" /></svg></button>
                    </template>
                </template>
                <template v-if="bar.id === 'shadow'">
                    <div class="sun month">
                        <input v-model="month" type="range" min="0" max="100" aria-label="월">
                        <div class="scale"><span v-for="(m, i) in 'JFMAMJJASOND'" :key="i">{{ m }}</span></div>
                    </div>
                    <div class="sun hour">
                        <input v-model="hour" type="range" min="0" max="100" aria-label="시간">
                        <div class="scale"><span>07:08</span><span class="noon">정오</span></div>
                    </div>
                </template>
            </div>
        </div>

        <main class="work">
            <aside class="side">
                <div class="palette" role="toolbar">
                    <span class="hgrip"></span>
                    <div v-for="(group, g) in palette" :key="g" class="cells">
                        <button v-for="item in group" :key="item.icon" type="button" class="tool" :class="{ active: item.active }" :aria-label="item.label">
                            <svg><use :href="'#i-' + item.icon" /></svg>
                        </button>
                    </div>
                </div>
            </aside>

            <section class="viewport">
                <svg viewBox="90 118 1527 893" preserveAspectRatio="xMidYMin slice" stroke-linejoin="round">
                    <defs>
                        <linearGradient id="ring" x1="0" y1="0" x2="0.1" y2="1">
                            <stop offset="0" stop-color="#fff" /><stop offset="0.14" stop-color="#fafafa" /><stop offset="0.28" stop-color="#d8d8d8" /><stop offset="0.5" stop-color="#a4a4a4" /><stop offset="1" stop-color="#6c6c6c" />
                        </linearGradient>
                        <linearGradient id="rim" x1="0" y1="0" x2="0" y2="1">
                            <stop offset="0" stop-color="#d2d2d2" /><stop offset="0.4" stop-color="#f2f2f2" /><stop offset="1" stop-color="#fff" />
                        </linearGradient>
                        <linearGradient id="pipe" x1="0" y1="0" x2="1" y2="0">
                            <stop offset="0" stop-color="#a6a6a6" /><stop offset="0.2" stop-color="#c6c6c6" /><stop offset="0.5" stop-color="#d6d6d6" /><stop offset="0.8" stop-color="#c4c4c4" /><stop offset="1" stop-color="#999" />
                        </linearGradient>
                        <clipPath id="hole"><polygon :points="holeInner" /></clipPath>
                    </defs>
                    <g transform="translate(640 110) scale(0.33333)" fill="none" stroke="#000" shape-rendering="crispEdges">
                        <!-- lid -->
                        <path d="M66 0L163 628L192 628L1262 591H1289L1412 0Z" fill="#c9c9c9" stroke-width="8" />
                        <!-- hinge and seat -->
                        <path d="M190 628L1262 592L1296 843L1306 844L1333 880L1450 1716L1430 1800H160L148 1768L156 1260L160 916L190 883Z" fill="#fff" stroke="none" />
                        <path d="M186 883L160 916L148 1768L175 1745L184 890Z" fill="#b9b9b9" stroke-width="3" />
                        <path d="M1306 844L1333 880L1450 1716L1430 1698L1312 855Z" fill="#b4b4b4" stroke-width="3" />
                        <path d="M190 628V883M1262 592L1296 843" stroke-width="9" />
                        <path d="M184 883L467 873L464 804L1020 786L1029 853L1306 844" stroke-width="8" />
                        <g transform="translate(90 930)">
                            <polygon :points="seatOuter" fill="url(#rim)" stroke="none" />
                            <polygon :points="seatInner" fill="#fff" stroke="none" />
                            <polyline :points="seatInner" stroke-width="3" />
                            <path d="M58 838L85 815M1340 768L1360 786" stroke-width="3" />
                            <polyline :points="seatOuter" stroke-width="7" />
                            <path d="M58 838L70 -14L96 -47L103 -47M1360 786L1243 -50L1216 -86" stroke-width="7" />
                            <polygon :points="holeOuter" fill="url(#ring)" stroke-width="3" />
                            <g clip-path="url(#hole)" stroke-width="3">
                                <rect x="280" y="100" width="840" height="1080" fill="#c6c6c6" stroke="none" />
                                <path d="M280 60H1100V262L280 292Z" fill="#fff" stroke="none" />
                                <path d="M1000 335L1052 880L1120 800V400Z" fill="#b0b0b0" />
                                <path d="M320 470L328 745L300 740Z" fill="#a5a5a5" />
                                <path d="M380 289L975 266V273L768 346L522 353L370 308Z" fill="#8d8d8d" />
                                <path d="M522 353L768 346V370L550 377Z" fill="#959595" />
                                <path d="M522 353L550 377L560 570L534 700Z" fill="#8f8f8f" />
                                <path d="M560 570L534 700L541 718L562 750L594 775L630 788L670 791L712 784L745 768L774 744L792 712L794 690L782 588L748 627H612Z" fill="url(#pipe)" />
                                <path d="M550 377L768 370L782 588L770 605L748 627L715 641L680 646L645 645L612 634L585 610L565 588L560 570Z" fill="#fff" />
                                <path d="M567 590L541 718M584 608L564 750M612 634L594 773M644 645L630 788M680 646L670 791M715 641L710 784M748 627L745 768M773 605V744" />
                                <path d="M534 700L355 843M541 718L378 895M558 750L428 982M594 775L500 1058M630 788L598 1118M670 791L710 1145M712 784L822 1125M745 768L920 1068M774 744L992 988M792 712L1040 900M794 690L1052 838H1070" />
                                <path d="M700 1144L840 1120L925 1064L850 1140Z" fill="#999" />
                                <path d="M768 346L782 588L794 690" stroke-width="7" />
                            </g>
                            <polygon :points="holeInner" stroke-width="6" />
                        </g>
                        <!-- rectangle cursor -->
                        <path d="M104 730H164V827H104Z" stroke="#17179c" stroke-width="3" />
                        <path d="M106 825L112 808L152 768Q160 764 164 774L122 816Z" fill="#c4201f" stroke="#3b2020" stroke-width="3" />
                        <path d="M106 825L112 808L122 816Z" fill="#ead9b6" stroke="none" />
                        <path d="M158 797H179V821H158Z" fill="#9a9a8c" stroke="#222" stroke-width="3" />
                    </g>
                </svg>
                <kbd>r</kbd>
            </section>

            <aside class="tray">
                <header class="tray-head">
                    <h1>기본 트레이</h1>
                    <button type="button" class="pin" aria-label="고정">
                        <svg viewBox="0 0 24 27"><path d="M7 3H17V15H7ZM14 3V15M2 16H22M12 16V26" fill="none" stroke="#000" stroke-width="3" /></svg>
                    </button>
                    <button type="button" class="quit" aria-label="닫기">
                        <svg viewBox="0 0 36 36"><path d="M12 11L24 25M24 11L12 25" stroke="#fff" stroke-width="5" /></svg>
                    </button>
                </header>
                <div class="tray-body">
                    <div class="panels">
                        <section class="display">
                            <p>표시:</p>
                            <label v-for="c in displayOn" :key="c.name"><input v-model="c.on" type="checkbox" disabled>{{ c.name }}</label>
                        </section>

                        <header class="panel-head">
                            <i></i><h2>가장자리 부드럽게</h2><button type="button" aria-label="가장자리 부드럽게 닫기">×</button>
                        </header>
                        <section class="soften">
                            <label for="angle">법선 간 각도:</label>
                            <output for="angle">17.3 &nbsp;도</output>
                            <input id="angle" type="range" min="0" max="100" value="10" disabled>
                            <div class="ticks"></div>
                            <label v-for="c in soften" :key="c.name" class="check"><input v-model="c.on" type="checkbox" disabled>{{ c.name }}</label>
                        </section>

                        <header class="panel-head">
                            <i></i><h2>레이어</h2><button type="button" aria-label="레이어 닫기">×</button>
                        </header>
                        <div class="panel-tools">
                            <button type="button" aria-label="레이어 추가"><svg><use href="#i-add" /></svg></button>
                            <button type="button" aria-label="레이어 삭제"><svg><use href="#i-remove" /></svg></button>
                            <span class="fill"></span>
                            <button type="button" aria-label="세부 정보"><svg><use href="#i-details" /></svg></button>
                        </div>
                        <div class="layers">
                            <table>
                                <thead><tr><th class="c-name">이름</th><th class="c-see">보기</th><th class="c-color">색상</th></tr></thead>
                                <tbody>
                                    <tr>
                                        <td><label class="layer"><input type="radio" name="layer" checked>Layer0</label></td>
                                        <td class="c-see"><input type="checkbox" class="see" checked aria-label="Layer0 보기"></td>
                                        <td class="c-color"><button type="button" class="swatch" aria-label="Layer0 색상"></button></td>
                                    </tr>
                                </tbody>
                            </table>
                        </div>
                        <div class="splitter"></div>

                        <header class="panel-head">
                            <i></i><h2>장면</h2><button type="button" aria-label="장면 닫기">×</button>
                        </header>
                        <div class="panel-tools scene-tools">
                            <button type="button" aria-label="장면 업데이트"><svg><use href="#i-refresh" /></svg></button>
                            <button type="button" aria-label="장면 추가"><svg><use href="#i-add" /></svg></button>
                            <button type="button" aria-label="장면 제거"><svg><use href="#i-remove" /></svg></button>
                            <span class="fill"></span>
                            <button type="button" aria-label="아래로"><svg><use href="#i-down" /></svg></button>
                            <button type="button" aria-label="위로"><svg><use href="#i-up" /></svg></button>
                            <button type="button" class="wide" aria-label="보기 옵션"><svg><use href="#i-list" /></svg></button>
                            <button type="button" aria-label="세부 표시"><svg><use href="#i-export" /></svg></button>
                            <button type="button" aria-label="메뉴"><svg><use href="#i-details" /></svg></button>
                        </div>
                        <div class="scenes"></div>
                    </div>
                    <div class="scroll">
                        <button type="button" aria-label="위로 스크롤"><svg viewBox="0 0 30 30"><path d="M4 21L15 10L26 21" /></svg></button>
                        <span class="before"></span>
                        <span class="thumb"></span>
                        <span class="after"></span>
                        <button type="button" aria-label="아래로 스크롤"><svg viewBox="0 0 30 30"><path d="M4 9L15 20L26 9" /></svg></button>
                    </div>
                </div>
            </aside>
        </main>

        <footer class="status">
            <button type="button" aria-label="위치"><svg><use href="#i-geo" /></svg></button>
            <button type="button" aria-label="정보"><svg><use href="#i-info" /></svg></button>
            <button type="button" aria-label="로그인"><svg><use href="#i-user" /></svg></button>
            <span class="bar-line"></span>
            <p>첫 번째 모서리를 선택하십시오.</p>
            <span class="bar-line"></span>
            <label for="measure">치수</label>
            <input id="measure" type="text">
        </footer>
    </div>
</template>

<script setup>
    import { reactive, ref } from "vue";

    const menus = ["파일(F)", "편집(E)", "보기(V)", "카메라(C)", "그리기(R)", "도구(T)", "창(W)", "도움말(H)"];
    const month = ref(86);
    const hour = ref(81);
    const tool = (icon, label, more) => ({ icon, label, ...more });

    const toolbars = [
        {
            id: "main",
            groups: [
                [tool("select", "선택")],
                [
                    tool("eraser", "지우개"),
                    tool("pencil", "선", { split: true }),
                    tool("arc2", "호", { split: true }),
                    tool("rect", "직사각형", { split: true, active: true })
                ],
                [tool("pushpull", "밀기/끌기"), tool("offset", "오프셋"), tool("move", "이동"), tool("rotate", "회전"), tool("scale", "배율")],
                [tool("tape", "줄자"), tool("text", "텍스트"), tool("paint", "페인트통")],
                [tool("orbit", "궤도"), tool("pan", "이동 보기"), tool("zoom", "확대/축소"), tool("zoomext", "범위 확대")],
                [tool("warehouse", "3D Warehouse"), tool("extwarehouse", "Extension Warehouse"), tool("layout", "LayOut")],
                [tool("ruby", "확장 프로그램 관리자")]
            ]
        },
        {
            id: "views",
            groups: [[tool("iso", "등각"), tool("top", "위"), tool("front", "앞"), tool("right", "오른쪽"), tool("back", "뒤"), tool("left", "왼쪽")]]
        },
        {
            id: "solid",
            groups: [
                [tool("shell", "외부 셸")],
                [tool("solid1", "교차"), tool("solid2", "결합"), tool("solid3", "빼기"), tool("solid4", "자르기"), tool("solid5", "분할")]
            ]
        },
        { id: "shadow", groups: [[tool("shadow", "그림자")]] },
        { id: "extra", groups: [[tool("grab", "상호 작용")]] }
    ];

    const palette = [
        [tool("select", "선택"), tool("component", "구성 요소"), tool("paint", "페인트통"), tool("eraser", "지우개")],
        [
            tool("pencil", "선"), tool("freehand", "자유형"),
            tool("rect", "직사각형", { active: true }), tool("rotrect", "회전된 직사각형"),
            tool("circle", "원"), tool("polygon", "다각형"),
            tool("arc", "호"), tool("arc2", "2점 호"),
            tool("arc3", "3점 호"), tool("pie", "파이")
        ],
        [tool("move", "이동"), tool("pushpull", "밀기/끌기"), tool("rotate", "회전"), tool("follow", "따라가기"), tool("scale", "배율"), tool("offset", "오프셋")],
        [tool("tape", "줄자"), tool("dimension", "치수"), tool("protractor", "각도기"), tool("text", "텍스트"), tool("axes", "축"), tool("text3d", "3D 텍스트")],
        [tool("orbit", "궤도"), tool("pan", "이동 보기"), tool("zoom", "확대/축소"), tool("zoomwin", "확대 창"), tool("zoomext", "범위 확대"), tool("previous", "이전")],
        [tool("position", "카메라 배치"), tool("look", "둘러보기"), tool("walk", "걷기"), tool("section", "단면")]
    ];

    const displayOn = reactive([
        { name: "면에", on: true },
        { name: "바닥에", on: true },
        { name: "가장자리에", on: false }
    ]);
    const soften = reactive([
        { name: "법선 부드럽게", on: true },
        { name: "동일 평면 부드럽게", on: false }
    ]);

    // 모델 윤곽 좌표
    const seatOuter = "58,838 98,972 180,1105 292,1217 428,1297 583,1346 745,1358 910,1332 1060,1270 1185,1177 1280,1060 1340,930 1360,786";
    const seatInner = "85,815 123,945 203,1072 305,1172 437,1250 590,1298 745,1310 905,1285 1052,1223 1165,1138 1260,1025 1318,900 1340,768";
    const holeOuter = "666,60 768,72 868,118 960,195 1035,298 1090,418 1117,552 1120,710 1097,838 1040,970 955,1072 852,1138 736,1164 620,1147 508,1088 415,995 342,877 297,740 280,590 291,455 330,320 390,215 473,130 563,80";
    const holeInner = "666,119 765,131 858,175 943,245 1008,340 1062,460 1088,585 1088,720 1063,850 1013,970 933,1065 838,1126 732,1150 620,1133 518,1078 430,985 367,880 322,745 308,605 320,470 353,362 410,260 485,187 570,138";
</script>

<style>
    body {
        margin: 0;
        background: #000;
    }
</style>

<style scoped>
    * {
        box-sizing: border-box;
    }

    .screen {
        display: flex;
        flex-direction: column;
        height: 100vh;
        padding: 42px 0;
        overflow: hidden;
        background: #000;
        color: #000;
        font-family: "Noto Sans CJK KR", "Noto Sans", sans-serif;
        font-size: 12px;
    }

    .sprite {
        position: absolute;
        width: 0;
        height: 0;
    }

    button {
        flex: none;
        margin: 0;
        padding: 0;
        border: 0;
        background: none;
        color: inherit;
        font: inherit;
    }

    p, h1, h2 {
        margin: 0;
        font-weight: 400;
    }

    .tiny-serif {
        font-family: "Liberation Serif", serif;
        fill: #111;
    }

    .solid-a {
        font-family: "Liberation Serif", serif;
        font-weight: 700;
    }

    .menu {
        display: flex;
        flex: none;
        gap: 16px;
        height: 26px;
        padding: 0 7px;
        background: #fff;
        font-size: 15px;
        line-height: 28px;
    }

    .bars {
        display: flex;
        flex: none;
        height: 48px;
        overflow: hidden;
        border-top: 1px solid #f8f8f8;
        border-bottom: 2px solid #a8a8a8;
        background: #f3f3f3;
    }

    .bar {
        display: flex;
        flex: none;
        align-items: center;
        padding: 0 1px 0 4px;
        border-right: 1px solid #a9a9a9;
    }

    .bar:last-child {
        flex: 1;
        min-width: 0;
        overflow: hidden;
        border-right: 0;
    }

    .grip {
        width: 3px;
        height: 40px;
        margin-right: 3px;
        background: repeating-linear-gradient(#b4b4b4 0 2px, transparent 2px 4px);
    }

    .vsep {
        width: 1px;
        height: 38px;
        margin: 0 5px 0 2px;
        background: #8b8b8b;
    }

    .tool {
        display: flex;
        align-items: center;
        justify-content: center;
        width: 42px;
        height: 42px;
    }

    .tool svg {
        width: 30px;
        height: 30px;
        overflow: visible;
    }

    .split {
        display: flex;
        align-items: center;
        width: 62px;
        height: 41px;
        margin-left: 2px;
    }

    .split .tool {
        height: 38px;
    }

    .more {
        display: flex;
        align-items: center;
        justify-content: center;
        width: 16px;
        height: 24px;
    }

    .more::before {
        border: 6px solid transparent;
        border-top: 7px solid #000;
        border-bottom: 0;
        content: "";
    }

    .active {
        border: 1px solid #90c8f0;
        background: #cde5f8;
    }

    .active .more {
        background: #e4f0fa;
    }

    .sun {
        display: flex;
        flex-direction: column;
        width: 146px;
        margin-left: 6px;
        font: 700 9px/8px "Liberation Sans", "Noto Sans CJK KR", sans-serif;
    }

    .sun.hour {
        width: 115px;
        margin-left: 15px;
    }

    .sun input {
        width: 100%;
        height: 14px;
        margin: 0;
        appearance: none;
        background: none;
    }

    .sun input::-webkit-slider-runnable-track {
        height: 9px;
        border: solid #8b8b8b;
        border-width: 2px 0 0 2px;
        background: linear-gradient(90deg, #fff, #f7dc86 15%, #f6bb22 36%, #f4701c 50%, #ee1c0e 68%, #f66 84%, #fbd0d0 92%, #fff);
    }

    .sun.hour input::-webkit-slider-runnable-track {
        background: linear-gradient(90deg, #f4f8fa, #98b9dc 40%, #6b90ea 65%, #5d74ee 85%, #4a55b0);
    }

    .sun input::-webkit-slider-thumb {
        width: 5px;
        height: 13px;
        margin-top: -3px;
        border: solid #a0a0a0;
        border-width: 0 1px 1px 0;
        appearance: none;
        background: #fafafa;
    }

    .scale {
        display: flex;
        justify-content: space-between;
        padding: 0 1px;
    }

    .month .scale span {
        width: 8px;
        text-align: center;
    }

    .hour .scale {
        padding: 0 33px 0 0;
    }

    .work {
        display: flex;
        flex: 1;
        min-height: 0;
        background: #f1f1f1;
    }

    .side {
        flex: none;
        width: 88px;
    }

    .palette {
        display: flex;
        flex-direction: column;
        padding: 3px 1px 1px 2px;
        border: solid #b0b0b0;
        border-width: 0 1px 2px 0;
        background: #f4f4f4;
    }

    .hgrip {
        height: 2px;
        margin: 0 0 4px 1px;
        background: repeating-linear-gradient(90deg, #b4b4b4 0 2px, transparent 2px 4px);
    }

    .cells {
        display: grid;
        grid-template-columns: 42px 42px;
    }

    .cells + .cells {
        margin-top: 2px;
        padding-top: 5px;
        border-top: 1px solid #8b8b8b;
    }

    .viewport {
        position: relative;
        flex: 1;
        min-width: 0;
        border: solid #757575;
        border-width: 2px 0 0 2px;
        border-bottom: 1px solid #fff;
        background: #cecece;
    }

    .viewport > svg {
        display: block;
        width: 100%;
        height: 100%;
    }

    kbd {
        position: absolute;
        right: 269px;
        bottom: 8px;
        width: 25px;
        height: 46px;
        border-radius: 4px;
        background: #878787;
        box-shadow: 0 0 3px 2px #bdbdbd;
        color: #fff;
        font: 700 26px/46px "Open Sans", sans-serif;
        text-align: center;
    }

    .tray {
        display: flex;
        flex: none;
        flex-direction: column;
        width: 303px;
        padding-left: 5px;
        border-left: 1px solid #fff;
    }

    .tray-head {
        display: flex;
        flex: none;
        align-items: center;
        height: 25px;
        padding: 0 4px;
        background: linear-gradient(#bccbda, #d6e3f0);
    }

    .tray-head h1 {
        flex: 1;
        font-size: 15px;
        line-height: 24px;
    }

    .tray-head svg {
        display: block;
        width: 100%;
        height: 100%;
    }

    .pin {
        width: 10px;
        height: 11px;
        margin-right: 8px;
    }

    .quit {
        width: 12px;
        height: 12px;
        background: #c05050;
    }

    .tray-body {
        display: flex;
        flex: 1;
        min-height: 0;
    }

    .panels {
        display: flex;
        flex: 1;
        flex-direction: column;
        min-width: 0;
        border-right: 1px solid #fff;
    }

    .display {
        display: flex;
        flex-direction: column;
        padding: 0 4px 8px;
        line-height: 20px;
    }

    .display label {
        display: flex;
        align-items: center;
        gap: 7px;
        height: 22px;
        padding-left: 70px;
        color: #a2a2a2;
    }

    input[type="checkbox"] {
        display: grid;
        flex: none;
        place-content: center;
        width: 15px;
        height: 15px;
        margin: 0;
        border: 2px solid;
        border-color: #8a8a8a #fff #fff #8a8a8a;
        appearance: none;
        background: #f4f4f4;
    }

    input[type="checkbox"]:checked::before {
        width: 8px;
        height: 4px;
        margin-bottom: 3px;
        border: solid #9a9a9a;
        border-width: 0 0 2px 2px;
        content: "";
        transform: rotate(-45deg);
    }

    .panel-head {
        display: flex;
        flex: none;
        align-items: center;
        height: 23px;
        padding: 0 3px 0 9px;
        border: 1px solid #b0b0b0;
        border-right: 0;
        background: linear-gradient(#e6e6e6, #b9b9b9);
    }

    .panel-head i {
        border: 5px solid transparent;
        border-top: 8px solid #000;
        border-bottom: 0;
    }

    .panel-head h2 {
        flex: 1;
        padding-left: 7px;
        font-size: 16px;
        line-height: 20px;
    }

    .panel-head button {
        width: 17px;
        height: 17px;
        border: 1px solid #999;
        outline: 1px solid #f5f5f5;
        background: #e2e2e2;
        font: 700 13px/15px "Liberation Sans", sans-serif;
    }

    .soften {
        display: flex;
        flex-direction: column;
        padding: 8px 28px 14px 9px;
        color: #a2a2a2;
        line-height: 20px;
    }

    .soften output {
        margin: 6px 0 12px 126px;
        font-size: 13px;
    }

    .soften input[type="range"] {
        width: 100%;
        height: 18px;
        margin: 0 0 0 6px;
        appearance: none;
        background: linear-gradient(transparent 7px, #999 7px 9px, #fff 9px 10px, transparent 10px);
    }

    .soften input[type="range"]::-webkit-slider-thumb {
        width: 9px;
        height: 18px;
        appearance: none;
        background: linear-gradient(90deg, #ccc 1px, #f6f6f6 1px 7px, #888 7px);
        clip-path: polygon(0 0, 100% 0, 100% 75%, 50% 100%, 0 75%);
    }

    .ticks {
        height: 3px;
        margin: 1px -2px 7px 11px;
        border: solid #000;
        border-width: 0 1px;
    }

    .soften .check {
        display: flex;
        align-items: center;
        gap: 7px;
        height: 20px;
    }

    .panel-tools {
        display: flex;
        flex: none;
        align-items: center;
        gap: 10px;
        height: 33px;
        padding: 0 5px 0 7px;
    }

    .panel-tools svg {
        display: block;
        width: 18px;
        height: 18px;
    }

    .scene-tools {
        gap: 9px;
        border-bottom: 1px solid #999;
    }

    .scene-tools .wide svg {
        width: 26px;
    }

    .fill {
        flex: 1;
    }

    .layers {
        flex: none;
        height: 219px;
        background: #fff;
    }

    table {
        width: 100%;
        border-collapse: collapse;
        table-layout: fixed;
    }

    th {
        height: 20px;
        padding: 0 6px;
        border: solid #707070;
        border-width: 0 2px 2px 0;
        background: #f1f1f1;
        font-weight: 400;
        line-height: 17px;
        text-align: left;
    }

    th.c-see {
        width: 50px;
    }

    th.c-color {
        width: 40px;
    }

    td {
        height: 27px;
        padding: 0 6px;
    }

    td.c-color {
        padding: 0 11px;
    }

    td.c-see {
        padding: 0 20px;
    }

    .layer {
        display: flex;
        align-items: center;
        gap: 6px;
        font-family: "Noto Sans", "Noto Sans CJK KR", sans-serif;
    }

    .layer input {
        width: 13px;
        height: 13px;
        margin: 0;
        border: 1px solid #222;
        border-radius: 50%;
        appearance: none;
        background: radial-gradient(circle, #000 4px, #fff 5px);
    }

    input.see[type="checkbox"] {
        width: 14px;
        height: 14px;
        border: 1px solid #333;
        background: #fff;
    }

    input.see[type="checkbox"]:checked::before {
        border-color: #000;
        border-width: 0 0 1px 1px;
    }

    .swatch {
        display: block;
        width: 20px;
        height: 20px;
        border: 1px solid #d87070;
        background: #ff5757;
    }

    .splitter {
        flex: none;
        height: 6px;
        margin: 2px 0 1px;
        border: 1px solid #b4b4b4;
    }

    .scenes {
        flex: 1;
        background: #fff;
    }

    .scroll {
        display: flex;
        flex: none;
        flex-direction: column;
        width: 20px;
        padding: 4px 1px 1px 0;
    }

    .scroll button {
        height: 18px;
    }

    .scroll svg {
        display: block;
        width: 13px;
        height: 13px;
        margin: 2px auto;
    }

    .scroll path {
        fill: none;
        stroke: #555;
        stroke-width: 5;
    }

    .before {
        flex: 747;
    }

    .thumb {
        flex: 21;
        background: #cdcdcd;
    }

    .after {
        flex: 61;
    }

    .status {
        display: flex;
        flex: none;
        gap: 17px;
        height: 26px;
        padding: 8px 5px 0 6px;
        background: #f1f1f1;
        font-size: 17px;
        line-height: 16px;
    }

    .status svg {
        display: block;
        width: 18px;
        height: 18px;
    }

    .bar-line {
        width: 1px;
        margin: 0 -7px 0 -4px;
        background: #999;
    }

    .status p {
        flex: 1;
    }

    .status label {
        margin-right: -9px;
        font-size: 16px;
    }

    .status input {
        width: 250px;
        height: 21px;
        margin-top: -3px;
        padding: 0 4px;
        border: 1px solid #aab4c4;
        border-bottom: 0;
        background: #f1f1f1;
        font: inherit;
    }
</style>
